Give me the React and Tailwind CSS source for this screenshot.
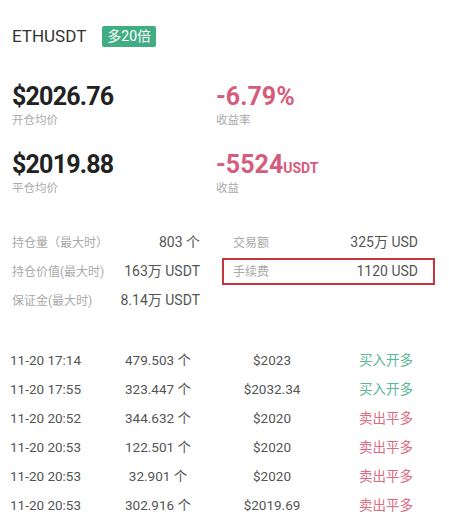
import React from 'react';

const stats = [
  { l1: '持仓量（最大时）', v1: '803 个', l2: '交易额', v2: '325万 USD' },
  { l1: '持仓价值(最大时)', v1: '163万 USDT', l2: '手续费', v2: '1120 USD', boxed: true },
  { l1: '保证金(最大时)', v1: '8.14万 USDT' },
];

const trades = [
  ['11-20 17:14', '479.503 个', '$2023', '买入开多', 'buy'],
  ['11-20 17:55', '323.447 个', '$2032.34', '买入开多', 'buy'],
  ['11-20 20:52', '344.632 个', '$2020', '卖出平多', 'sell'],
  ['11-20 20:53', '122.501 个', '$2020', '卖出平多', 'sell'],
  ['11-20 20:53', '32.901 个', '$2020', '卖出平多', 'sell'],
  ['11-20 20:53', '302.916 个', '$2019.69', '卖出平多', 'sell'],
];

export default function App() {
  return (
    <div className="w-[449px] h-[532px] bg-white overflow-hidden font-['Roboto','Noto_Sans_CJK_SC',sans-serif]">
      {/* header */}
      <div className="flex items-center pl-3 pt-[26px] h-[47px]">
        <span className="text-[17px] text-[#333]">ETHUSDT</span>
        <span className="ml-[16px] h-[21px] px-[5px] flex items-center rounded-[2px] bg-[#42ad85] text-white text-[14px]">多20倍</span>
      </div>

      {/* summary */}
      <div className="grid grid-cols-[204px_1fr] pl-3 mt-[37px] gap-y-[25px]">
        <div>
          <div className="text-[25px] leading-[26px] font-bold tracking-[-0.8px] text-[#222]">$2026.76</div>
          <div className="text-[11.5px] leading-[14px] mt-[3px] text-[#aaa]">开仓均价</div>
        </div>
        <div>
          <div className="text-[25px] leading-[26px] font-bold text-[#d65c7e]">-6.79%</div>
          <div className="text-[11.5px] leading-[14px] mt-[3px] text-[#aaa]">收益率</div>
        </div>
        <div>
          <div className="text-[25px] leading-[26px] font-bold tracking-[-0.8px] text-[#222]">$2019.88</div>
          <div className="text-[11.5px] leading-[14px] mt-[3px] text-[#aaa]">平仓均价</div>
        </div>
        <div>
          <div className="h-[26px] text-[25px] leading-[26px] font-bold text-[#d65c7e]">
            -5524<span className="text-[14px] leading-none">USDT</span>
          </div>
          <div className="text-[11.5px] leading-[14px] mt-[3px] text-[#aaa]">收益</div>
        </div>
      </div>

      {/* stats */}
      <div className="mt-[33px] flex flex-col">
        {stats.map((s, i) => (
          <div key={i} className="flex items-center h-[29px]">
            <div className="w-[200px] pl-3 flex justify-between items-center">
              <span className="text-[12px] text-[#aaa]">{s.l1}</span>
              <span className="text-[14px] text-[#555]">{s.v1}</span>
            </div>
            {s.l2 && (
              <div
                className={`ml-[22px] w-[213px] h-[27px] flex items-center justify-between pl-[9px] pr-[15px] ${
                  s.boxed ? 'border-2 border-[#c9343f]' : 'border-2 border-transparent'
                }`}
              >
                <span className="text-[12px] text-[#aaa]">{s.l2}</span>
                <span className="text-[14px] text-[#555]">{s.v2}</span>
              </div>
            )}
          </div>
        ))}
      </div>

      {/* trades */}
      <div className="mt-[31px] flex flex-col">
        {trades.map((t, i) => (
          <div key={i} className="grid grid-cols-[110px_76px_152px_76px] items-center h-[29px] pl-[10px] text-[13.5px] text-[#555]">
            <span>{t[0]}</span>
            <span className="text-center whitespace-nowrap">{t[1]}</span>
            <span className="text-center">{t[2]}</span>
            <span className={`text-center whitespace-nowrap ${t[4] === 'buy' ? 'text-[#5cb794]' : 'text-[#db6c84]'}`}>{t[3]}</span>
          </div>
        ))}
      </div>
    </div>
  );
}
